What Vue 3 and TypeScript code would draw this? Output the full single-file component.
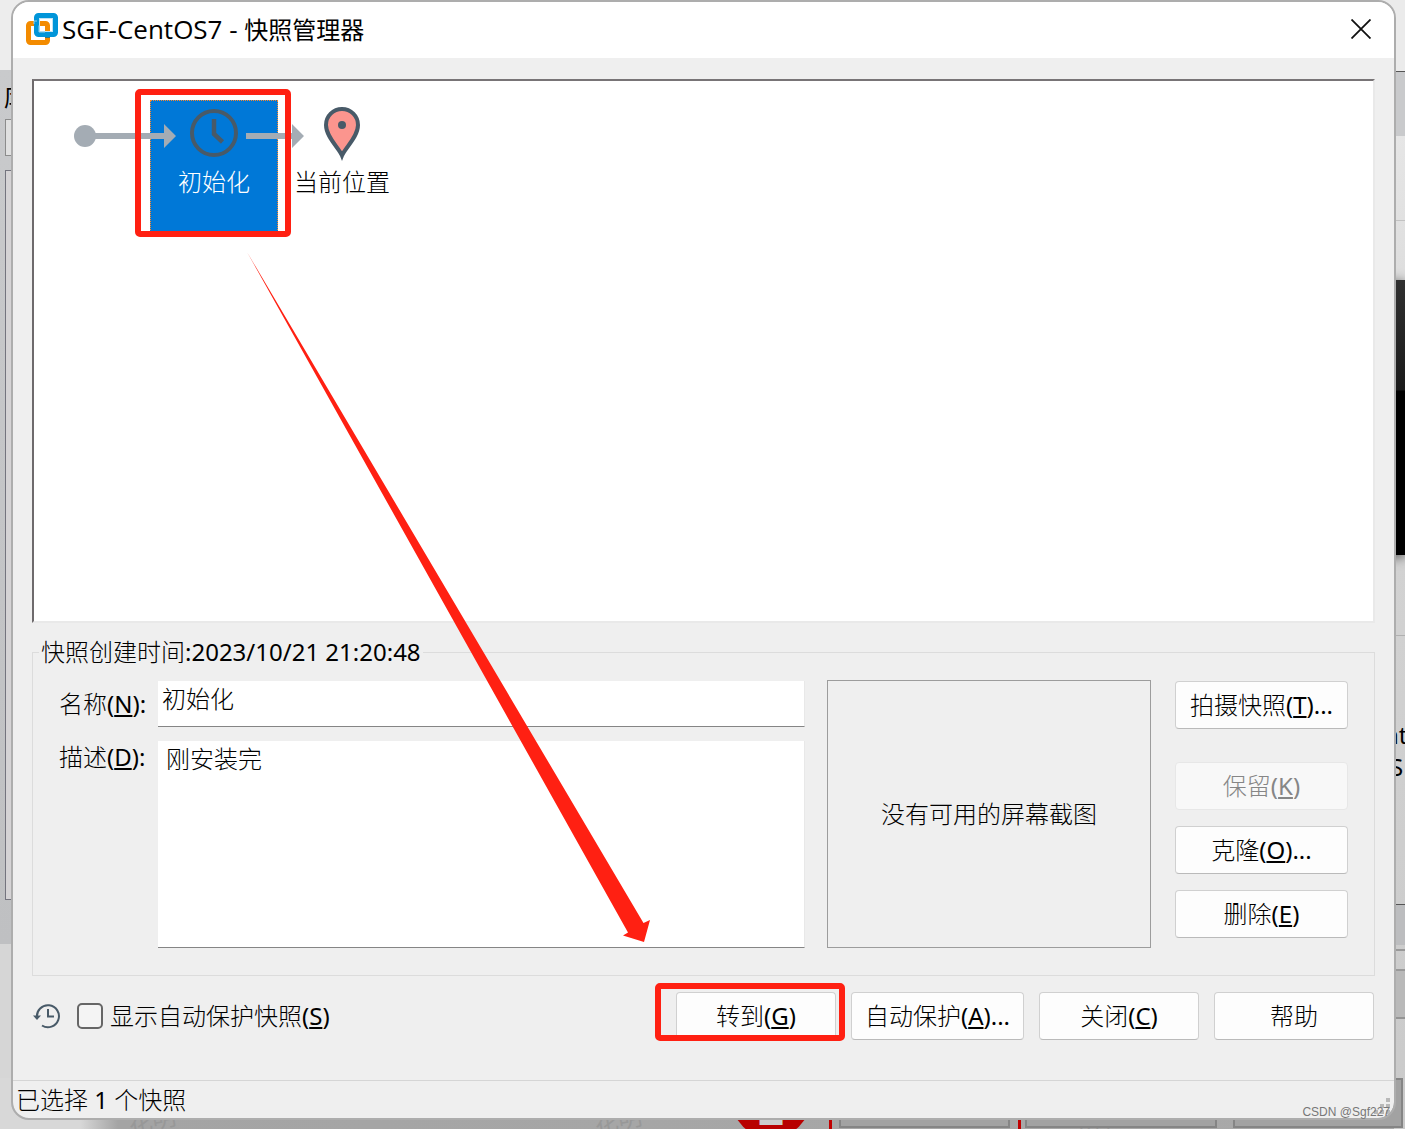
<script setup lang="ts">
import { ref } from 'vue'

interface ActionButton {
  text: string
  accessKey?: string
  suffix?: string
  disabled?: boolean
  wide?: boolean
  marked?: boolean
}

const snapshotActions: ActionButton[] = [
  { text: '拍摄快照', accessKey: 'T', suffix: '...' },
  { text: '保留', accessKey: 'K', disabled: true },
  { text: '克隆', accessKey: 'O', suffix: '...' },
  { text: '删除', accessKey: 'E' },
]

const dialogActions: ActionButton[] = [
  { text: '转到', accessKey: 'G', marked: true },
  { text: '自动保护', accessKey: 'A', suffix: '...', wide: true },
  { text: '关闭', accessKey: 'C' },
  { text: '帮助' },
]

const name = ref('初始化')
const description = ref('刚安装完')
const showAutoProtect = ref(false)
</script>

<template>
  <div class="desktop">
    <div class="behind left" aria-hidden="true">
      <div class="left-title">库</div>
      <div class="left-search"></div>
      <div class="left-tree"></div>
    </div>
    <div class="behind right" aria-hidden="true">
      <div class="right-band"></div>
      <div class="right-rule"></div>
      <div class="right-screen"></div>
      <div class="right-rule lower"></div>
      <div class="right-text">nt<span>S</span></div>
      <div class="right-foot"></div>
      <div class="right-row"></div>
      <div class="right-cell"></div>
    </div>
    <div class="behind bottom" aria-hidden="true">
      <span class="ghost g1">花明</span>
      <span class="ghost g2">花明</span>
      <span class="ghost g3">花明</span>
      <span class="badge">2</span>
      <span class="mark m1"></span>
      <span class="mark m2"></span>
      <span class="slab s1"></span>
      <span class="slab s2"></span>
      <span class="slab s3"></span>
    </div>

    <main class="dialog">
      <header class="titlebar">
        <svg class="logo" viewBox="0 0 32 32" width="32" height="32">
          <rect x="2.5" y="10.5" width="19" height="19" rx="2" fill="none" stroke="#f38b00" stroke-width="5" />
          <rect x="13" y="5" width="14" height="14" rx="1" fill="none" stroke="#bfe3f4" stroke-width="2" />
          <rect x="10.500" y="2.500" width="19" height="19" rx="2" fill="none" stroke="#0095d9" stroke-width="5" />
          <path d="M8 11V8h3M13 12.500v6.500h6" fill="none" stroke="#8fd0ee" stroke-width="1" />
          <path d="M19 24h5v1h-5z" fill="#3a7a80" />
        </svg>
        <h1><span class="title-latin">SGF-CentOS7 - </span>快照管理器</h1>
        <button class="close" type="button" aria-label="关闭窗口">
          <svg viewBox="0 0 20 20" width="20" height="20">
            <path d="M.5.5l19 19M19.5.5l-19 19" stroke="#111" stroke-width="1.8" />
          </svg>
        </button>
      </header>

      <section class="tree">
        <div class="node selected">
          <svg viewBox="0 0 48 48" width="48" height="48">
            <circle cx="24" cy="24" r="22" fill="none" stroke="#485a68" stroke-width="4" />
            <path d="M24 10v15l8.500 8" fill="none" stroke="#485a68" stroke-width="4.500" />
          </svg>
          <span>初始化</span>
        </div>
        <div class="node here">
          <svg viewBox="0 0 36 54" width="36" height="54">
            <path
              d="M18 48.500C15 41 2 30 2 18a16 16 0 0 1 32 0c0 12-13 23-16 30.500z"
              fill="#fb958e"
              stroke="#485a68"
              stroke-width="4"
            />
            <circle cx="18" cy="18" r="4" fill="#485a68" />
          </svg>
          <span>当前位置</span>
        </div>
        <svg class="links" viewBox="0 0 240 24" width="240" height="24" fill="#a4acb4">
          <circle cx="11" cy="12" r="11" />
          <path d="M11 9h79V0l12 12-12 12v-9H11zM172 9h46V0l12 12-12 12v-9h-46z" />
        </svg>
        <div class="highlight"></div>
      </section>

      <fieldset class="details">
        <legend>快照创建时间<span class="latin">:2023/10/21 21:20:48</span></legend>
        <div class="form">
          <label for="snap-name">名称<span class="latin">(<u>N</u>):</span></label>
          <input id="snap-name" v-model="name" type="text" />
          <label class="upper" for="snap-desc">描述<span class="latin">(<u>D</u>):</span></label>
          <textarea id="snap-desc" v-model="description"></textarea>
        </div>
        <div class="preview">没有可用的屏幕截图</div>
        <div class="side">
          <button v-for="a in snapshotActions" :key="a.text" type="button" class="btn" :disabled="a.disabled">
            {{ a.text }}<span v-if="a.accessKey" class="latin">(<u>{{ a.accessKey }}</u>){{ a.suffix }}</span>
          </button>
        </div>
      </fieldset>

      <div class="actions">
        <svg class="history" viewBox="0 0 28 26" width="28" height="26">
          <path d="M4 14.500A11 11 0 1 1 9 22.500" fill="none" stroke="#485a68" stroke-width="2" />
          <path d="M0 12.500h8l-4 4.500z" fill="#485a68" />
          <path d="M15 6v7.500h6" fill="none" stroke="#485a68" stroke-width="2" />
        </svg>
        <label class="check">
          <input v-model="showAutoProtect" type="checkbox" />
          <span>显示自动保护快照<span class="latin">(<u>S</u>)</span></span>
        </label>
        <div class="buttons">
          <button
            v-for="a in dialogActions"
            :key="a.text"
            type="button"
            class="btn"
            :class="{ wide: a.wide, marked: a.marked }"
          >
            {{ a.text }}<span v-if="a.accessKey" class="latin">(<u>{{ a.accessKey }}</u>){{ a.suffix }}</span>
          </button>
        </div>
      </div>

      <footer class="status">
        已选择 <span class="latin">1</span> 个快照
        <svg class="grip" viewBox="0 0 18 18" width="18" height="18" fill="#b8b8b8">
          <path d="M14 0h4v4h-4zM14 6h4v4h-4zM8 6h4v4H8zM14 12h4v4h-4zM8 12h4v4H8zM2 12h4v4H2z" />
        </svg>
      </footer>

      <svg class="pointer" viewBox="0 0 403 690" width="403" height="690">
        <path d="M0 0L396.500 671L403 668L397 690L376 683.500L381 680.500Z" fill="#ff2012" />
      </svg>
    </main>
    <div class="credit">CSDN @Sgf227</div>
  </div>
</template>

<style>
html,
body {
  margin: 0;
  overflow: hidden;
}
</style>

<style scoped>
*,
*::after {
  box-sizing: border-box;
}

.desktop {
  position: relative;
  display: flex;
  min-height: 100vh;
  padding: 0 9px 9px 11px;
  overflow: hidden;
  background: #d6d6d6;
  color: #000;
  font-family: 'Noto Sans', 'Noto Sans CJK SC', sans-serif;
  font-size: 24px;
  line-height: 32px;
}

/* dialog */
.dialog {
  position: relative;
  z-index: 1;
  display: flex;
  flex: 1;
  flex-direction: column;
  min-width: 0;
  overflow: hidden;
  border: 2px solid #adadad;
  border-radius: 18px;
  background: #efefef;
  background-clip: padding-box;
}

.titlebar {
  display: flex;
  align-items: center;
  height: 56px;
  padding: 0 23px 2px 13px;
  background: #fff;
}

.logo {
  margin-right: 4px;
}

h1 {
  flex: 1;
  margin: 0;
  font-size: 24px;
  font-weight: 400;
  line-height: 32px;
  white-space: pre;
}

.title-latin {
  font-family: 'Open Sans', 'Noto Sans', sans-serif;
  font-size: 26px;
}

.latin {
  font-weight: 400;
}

.close {
  display: flex;
  padding: 0;
  border: 0;
  background: none;
}

.tree {
  position: relative;
  flex: 1;
  min-height: 240px;
  margin: 21px 19px 0;
  border: 2px solid #6e6a6c;
  border-top-color: #787476;
  border-right: 2px solid #e9e9e9;
  border-bottom: 2px solid #e9e9e9;
  background: #fff;
}

.node {
  position: absolute;
  display: flex;
  flex-direction: column;
  align-items: center;
  width: 128px;
  white-space: nowrap;
  font-weight: 300;
}

.selected {
  top: 19px;
  left: 116px;
  height: 132px;
  padding-top: 8px;
  border: 1px dotted #ff8728;
  background: #0078d7;
  color: #fff;
}

.selected span {
  margin-top: 9px;
}

.here {
  top: 26px;
  left: 244px;
}

.here span {
  margin-top: 5px;
}

.links {
  position: absolute;
  top: 43px;
  left: 40px;
}

.highlight {
  position: absolute;
  top: 8px;
  left: 101px;
  width: 156px;
  height: 148px;
  border: 6px solid #ff2012;
  border-radius: 5px;
}

.pointer {
  position: absolute;
  top: 250px;
  left: 234px;
  pointer-events: none;
}

.details {
  display: flex;
  min-width: 0;
  height: 340px;
  margin: 13px 19px 0;
  padding: 12px 26px 27px 25px;
  border: 1px solid #dcdcdc;
  font-weight: 300;
}

legend {
  margin-left: -19px;
  padding: 0 2px;
}

.form {
  display: grid;
  flex: 1;
  grid-template-rows: 46px 207px;
  grid-template-columns: 100px minmax(0, 1fr);
  row-gap: 14px;
  min-width: 0;
  padding-top: 1px;
}

.form label {
  padding: 7px 0 0 1px;
}

.form .upper {
  padding-top: 0;
}

input[type='text'],
textarea {
  width: 100%;
  height: 100%;
  border: 0;
  border-right: 1px solid #e8e8e8;
  border-bottom: 1px solid #858585;
  border-radius: 0;
  outline: 0;
  background: #fff;
  color: #000;
  font: inherit;
  resize: none;
}

input[type='text'] {
  padding: 0 4px 12px;
}

textarea {
  padding: 2px 8px;
}

.preview {
  display: flex;
  align-items: center;
  justify-content: center;
  width: 324px;
  margin: 0 24px 0 22px;
  border: 1px solid #9c9c9c;
}

.side {
  display: flex;
  flex-direction: column;
  gap: 16px;
  width: 173px;
  padding-top: 1px;
}

.side .btn {
  width: 100%;
}

.side .btn:first-child {
  margin-bottom: 17px;
}

.btn {
  position: relative;
  flex: none;
  width: 160px;
  height: 48px;
  padding: 0;
  border: 1px solid #d0d0d0;
  border-bottom-color: #bababa;
  border-radius: 4px;
  background: #fdfdfd;
  color: #000;
  font: inherit;
  font-weight: 300;
  white-space: nowrap;
}

.btn:disabled {
  border-color: #e7e7e7;
  background: #f8f8f8;
  color: #868686;
}

.btn.wide {
  width: 173px;
}

.marked::after {
  position: absolute;
  top: -10px;
  left: -22px;
  width: 190px;
  height: 58px;
  border: 6px solid #ff2012;
  border-radius: 5px;
  content: '';
}

u {
  text-decoration-thickness: 2px;
  text-underline-offset: 2px;
}

.actions {
  display: flex;
  align-items: center;
  height: 48px;
  margin: 16px 20px 40px;
  font-weight: 300;
}

.check {
  display: flex;
  align-items: center;
  gap: 7px;
  margin-left: 16px;
}

.check input {
  width: 26px;
  height: 26px;
  margin: 0;
  border: 2px solid #666;
  border-radius: 5px;
  appearance: none;
  background: #f4f4f4;
}

.buttons {
  display: flex;
  gap: 15px;
  margin-left: auto;
}

.status {
  position: relative;
  height: 38px;
  padding: 3px 3px 0;
  border-top: 1px solid #d5d5d5;
  font-weight: 300;
}

.grip {
  position: absolute;
  right: 4px;
  bottom: 2px;
}

.credit {
  position: absolute;
  right: 15px;
  bottom: 9px;
  z-index: 2;
  color: #777;
  font-family: 'Liberation Sans', sans-serif;
  font-size: 12px;
  line-height: 16px;
}

/* windows lying behind the dialog */
.behind,
.behind > * {
  position: absolute;
}

.left {
  top: 0;
  bottom: 0;
  left: 0;
  width: 30px;
  background: linear-gradient(#ededed 70px, #c9cacc 70px, #bfc0c2 944px, #d6d6d6 944px);
}

.left-title {
  top: 81px;
  left: 4px;
}

.left-search {
  top: 119px;
  left: 5px;
  width: 25px;
  height: 37px;
  border: 1px solid #8c8c8c;
  background: #e0e0e0;
}

.left-tree {
  top: 170px;
  left: 5px;
  width: 25px;
  height: 730px;
  border: 1px solid #74747e;
  background: #d5d3d5;
}

.right {
  top: 0;
  right: 0;
  bottom: 0;
  width: 30px;
  overflow: hidden;
  background: linear-gradient(#ebebeb 135px, #e6e6e6 135px, #dedede 270px, #d2d2d2 560px, #cacaca);
}

.right > * {
  right: 0;
  left: 0;
}

.right-band {
  top: 71px;
  height: 65px;
  border-top: 1px solid #555;
  background: #c9cacc;
}

.right-rule {
  top: 220px;
  height: 1px;
  background: #c2c2c2;
}

.right-rule.lower {
  top: 635px;
  background: #b0b0b0;
}

.right-screen {
  top: 280px;
  height: 275px;
  background: linear-gradient(#303030, #1a1a1a 110px, #000 111px);
  box-shadow: 0 2px 12px #555;
}

.right .right-text {
  top: 719px;
  left: 9px;
}

.right-text span {
  display: block;
  padding-left: 6px;
}

.right-foot {
  top: 904px;
  height: 41px;
  border-top: 1px solid #555;
  background: #bcbdbf;
}

.right-row {
  top: 949px;
  height: 22px;
  border: solid #999;
  border-width: 2px 0;
}

.right-cell {
  top: 971px;
  height: 48px;
  border-bottom: 2px solid #949494;
  background: #b9b9b9;
}

.bottom {
  right: 0;
  bottom: 0;
  left: 0;
  height: 51px;
  overflow: hidden;
  background: linear-gradient(90deg, #d8d8d8 80px, #a4a4a4 118px, #a9a9a9 1394px, transparent 1394px);
}

.ghost {
  top: 26px;
  color: #989898;
  transform: rotate(-10deg);
}

.g1 { left: 128px; }
.g2 { left: 594px; }
.g3 { left: 1074px; }

.badge {
  top: -20px;
  left: 731px;
  width: 80px;
  height: 80px;
  border-radius: 50%;
  background: #b80000;
  color: #ccc;
  font-size: 46px;
  font-weight: 700;
  line-height: 98px;
  text-align: center;
}

.mark {
  top: 0;
  bottom: 0;
  width: 3px;
  background: #c00000;
}

.m1 { left: 829px; }
.m2 { left: 1018px; }

.slab {
  top: 0;
  height: 50px;
  border: 2px solid #858585;
  background: #a2a2a2;
}

.s1 { left: 839px; width: 171px; }
.s2 { left: 1025px; width: 192px; }
.s3 { left: 1233px; width: 170px; }
</style>
